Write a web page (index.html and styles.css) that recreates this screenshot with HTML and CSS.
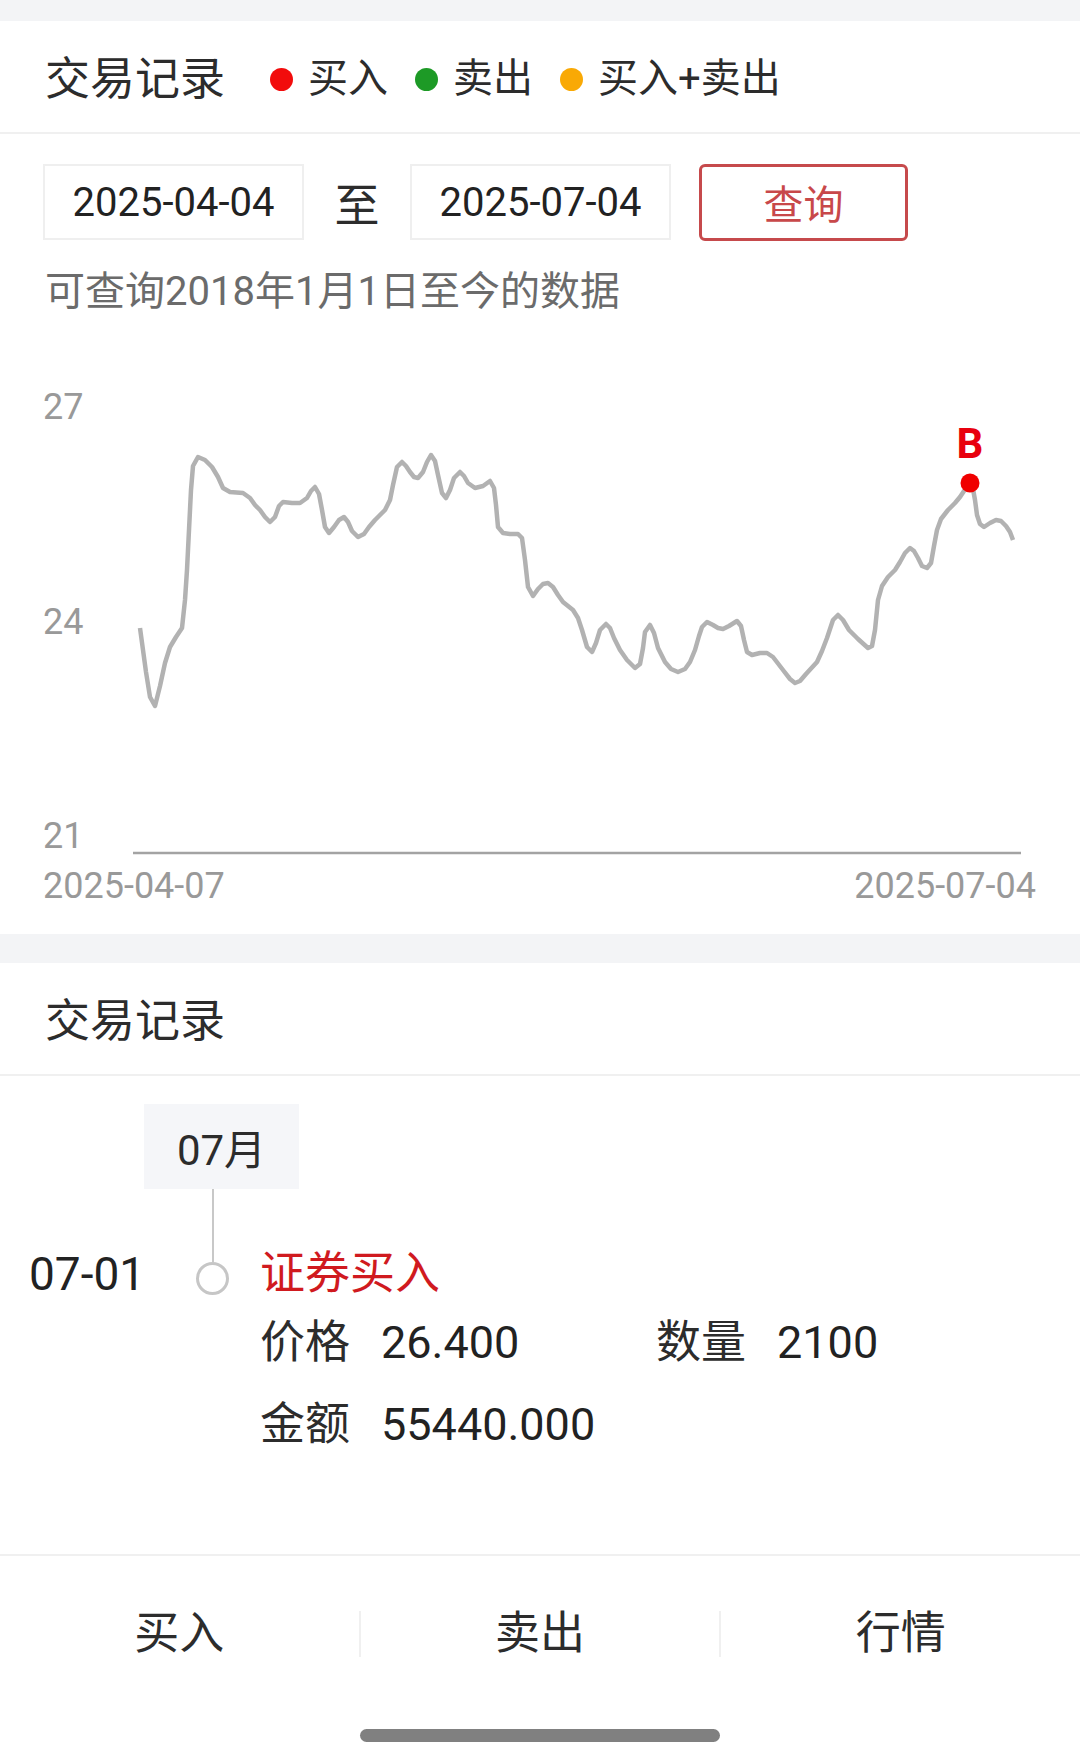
FILE: index.html
```html
<!DOCTYPE html>
<html lang="zh-CN">
<head>
    <meta charset="UTF-8">
    <meta name="viewport" content="width=device-width, initial-scale=1.0">
    <title>交易记录</title>
    <link rel="stylesheet" href="styles.css">
</head>
<body>
    <div class="page">
        <div class="band band-top"></div>

        <div class="section-head">
            <span class="section-title">交易记录</span>
            <div class="legend">
                <span class="legend-item"><i class="dot dot-buy"></i>买入</span>
                <span class="legend-item"><i class="dot dot-sell"></i>卖出</span>
                <span class="legend-item"><i class="dot dot-both"></i>买入+卖出</span>
            </div>
        </div>

        <form class="query" id="queryForm">
            <div class="date-box">2025-04-04</div>
            <span class="date-sep">至</span>
            <div class="date-box">2025-07-04</div>
            <button type="button" class="query-btn">查询</button>
        </form>
        <p class="hint">可查询2018年1月1日至今的数据</p>

        <!-- 走势图：坐标直接用页面像素 -->
        <svg class="chart" viewBox="0 322 1080 612" preserveAspectRatio="none">
            <text class="axis-label" x="43" y="419">27</text>
            <text class="axis-label" x="43" y="634">24</text>
            <text class="axis-label" x="43" y="848">21</text>
            <line class="axis" x1="133" y1="853" x2="1021" y2="853"/>
            <text class="axis-label" x="43" y="898">2025-04-07</text>
            <text class="axis-label" x="1036" y="898" text-anchor="end">2025-07-04</text>
            <polyline class="price-line" points="140,628 143,650 146,672 150,697 155,706 160,686 165,663 170,647 176,637 182,628 185,600 187,570 189,530 191,490 193,466 198,457 205,460 212,467 218,477 223,488 230,492 243,493 250,498 255,505 260,510 265,517 270,522 275,517 279,506 283,502 292,503 300,503 307,498 311,491 315,487 319,494 322,510 325,527 329,533 334,527 339,520 344,517 348,522 352,531 358,537 364,534 369,527 375,520 385,510 390,500 393,485 397,467 402,462 406,466 410,472 414,477 418,478 423,472 427,462 431,455 435,461 438,475 442,493 446,498 450,490 454,478 460,472 464,476 468,483 475,488 483,486 490,481 494,488 496,505 498,527 503,533 510,534 518,534 522,538 525,560 528,587 533,596 538,589 543,584 548,583 553,587 558,595 563,602 573,610 578,618 582,630 587,647 592,652 596,643 600,630 606,624 610,628 614,638 620,650 627,660 635,668 640,664 643,648 645,632 650,625 654,633 658,648 665,662 671,669 678,672 685,669 690,662 695,650 699,636 702,627 707,622 713,625 718,628 723,629 729,626 737,621 741,626 744,640 747,652 752,655 760,653 767,653 773,657 783,670 790,679 795,683 800,681 806,674 817,662 822,651 827,638 833,620 838,615 843,620 849,630 858,639 868,648 872,646 875,630 878,600 882,586 888,577 895,570 900,562 905,553 910,548 914,551 918,558 922,566 927,568 931,563 934,546 937,530 941,519 948,510 955,503 960,497 966,488 970,483 973,489 975,500 977,515 980,524 984,527 990,523 996,520 1001,521 1006,526 1010,532 1013,540"/>
            <text class="buy-mark" x="970" y="458" text-anchor="middle">B</text>
            <circle class="buy-dot" cx="970" cy="483" r="9.5"/>
        </svg>

        <div class="band band-mid"></div>

        <div class="section-head">
            <span class="section-title">交易记录</span>
        </div>

        <div class="timeline">
            <div class="month-row"><span class="month">07月</span></div>
            <div class="connector"></div>
            <div class="record">
                <div class="record-date">07-01</div>
                <div class="rail"><span class="rail-dot"></span></div>
                <div class="record-body">
                    <div class="record-title">证券买入</div>
                    <div class="record-grid">
                        <div class="field"><span class="field-label">价格</span>26.400</div>
                        <div class="field"><span class="field-label">数量</span>2100</div>
                        <div class="field"><span class="field-label">金额</span>55440.000</div>
                    </div>
                </div>
            </div>
        </div>

        <nav class="bottom-nav">
            <a class="nav-item">买入</a>
            <a class="nav-item">卖出</a>
            <a class="nav-item">行情</a>
        </nav>
        <div class="home-bar"><span class="home-indicator"></span></div>
    </div>
</body>
</html>
```

FILE: styles.css
```css
body {
    margin: 0;
    background-color: #fff;
    font-family: Roboto, "Noto Sans CJK SC", sans-serif;
    color: #333;
}

.page {
    width: 1080px;
    height: 1763px;
    display: flex;
    flex-direction: column;
    overflow: hidden;
}

.band {
    background-color: #f3f4f6;
    flex-shrink: 0;
}

.band-top {
    height: 21px;
}

.band-mid {
    height: 29px;
}

/* 标题栏 */
.section-head {
    height: 113px;
    box-sizing: border-box;
    display: flex;
    align-items: center;
    padding: 5px 0 0 45px;
    border-bottom: 2px solid #f0f0f0;
    flex-shrink: 0;
}

.section-title {
    font-size: 45px;
    line-height: 1;
    color: #2c2c2c;
}

.legend {
    display: flex;
    align-items: center;
    margin-left: 45px;
    gap: 27px;
}

.legend-item {
    display: flex;
    align-items: center;
    font-size: 40px;
    line-height: 1;
    color: #2c2c2c;
}

.dot {
    display: inline-block;
    width: 23px;
    height: 23px;
    border-radius: 50%;
    margin-right: 15px;
}

.dot-buy {
    background-color: #f20c0c;
}

.dot-sell {
    background-color: #1d9a26;
}

.dot-both {
    background-color: #f9a905;
}

/* 查询条件 */
.query {
    display: flex;
    align-items: center;
    margin: 30px 0 0 43px;
    height: 76px;
}

.date-box {
    width: 257px;
    height: 72px;
    border: 2px solid #efefef;
    display: flex;
    align-items: center;
    justify-content: center;
    font-size: 40px;
    color: #222;
}

.date-sep {
    width: 106px;
    text-align: center;
    font-size: 45px;
    color: #2c2c2c;
}

.query-btn {
    width: 209px;
    height: 77px;
    margin-left: 28px;
    border: 3px solid #c64a4c;
    border-radius: 6px;
    background: #fff;
    color: #c8484a;
    font-family: inherit;
    font-size: 40px;
    padding: 0;
}

.hint {
    margin: 22px 0 0 45px;
    font-size: 40px;
    line-height: 60px;
    color: #6b6b6b;
}

/* 走势图 */
.chart {
    display: block;
    width: 1080px;
    height: 612px;
    flex-shrink: 0;
}

.axis-label {
    font-family: Roboto, sans-serif;
    font-size: 36px;
    fill: #999;
}

.axis {
    stroke: #a3a3a3;
    stroke-width: 2.5;
}

.price-line {
    fill: none;
    stroke: #b2b2b2;
    stroke-width: 4.5;
    stroke-linejoin: round;
    stroke-linecap: butt;
}

.buy-mark {
    font-family: Roboto, sans-serif;
    font-weight: bold;
    font-size: 42px;
    fill: #e8000e;
}

.buy-dot {
    fill: #f00000;
}

/* 时间轴 */
.timeline {
    flex: 1;
    padding-top: 28px;
}

.month-row {
    padding-left: 144px;
}

.month {
    display: inline-flex;
    align-items: center;
    justify-content: center;
    width: 155px;
    height: 85px;
    background-color: #f5f6f9;
    font-size: 42px;
    color: #2c2c2c;
}

.connector {
    width: 2px;
    height: 67px;
    margin-left: 212px;
    background-color: #c8c8c8;
}

.record {
    display: flex;
    align-items: flex-start;
}

.record-date {
    width: 167px;
    padding-left: 29px;
    font-size: 46px;
    line-height: 36px;
    color: #222;
}

.rail {
    width: 33px;
    padding-top: 6px;
    position: relative;
}

.rail::before {
    content: "";
    position: absolute;
    left: 16px;
    top: 0;
    width: 2px;
    height: 7px;
    background-color: #c8c8c8;
}

.rail-dot {
    display: block;
    width: 27px;
    height: 27px;
    border: 3px solid #c6c6c6;
    border-radius: 50%;
    background: #fff;
}

.record-body {
    padding-left: 31px;
}

.record-title {
    font-size: 45px;
    line-height: 36px;
    color: #d01a1f;
}

.record-grid {
    display: grid;
    grid-template-columns: 396px auto;
    margin-top: 10px;
}

.field {
    font-size: 45px;
    line-height: 82px;
    color: #222;
}

.field-label {
    margin-right: 31px;
    color: #2c2c2c;
}

/* 底部导航 */
.bottom-nav {
    display: flex;
    align-items: center;
    height: 155px;
    border-top: 2px solid #f0f0f0;
    flex-shrink: 0;
}

.nav-item {
    flex: 1;
    text-align: center;
    font-size: 45px;
    line-height: 46px;
    color: #2c2c2c;
}

.nav-item + .nav-item {
    border-left: 2px solid #f0f0f0;
}

.home-bar {
    height: 52px;
    flex-shrink: 0;
}

.home-indicator {
    display: block;
    width: 360px;
    height: 13px;
    margin: 18px auto 0;
    border-radius: 7px;
    background-color: #808080;
}
```
